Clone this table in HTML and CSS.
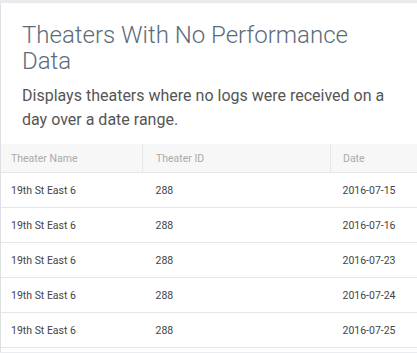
FILE: index.html
```html
<!DOCTYPE html>
<html lang="en">
<head>
  <meta charset="UTF-8" />
  <title>Theaters With No Performance Data</title>
  <link rel="stylesheet" href="styles.css">
</head>
<body>
  <div class="card">
    <div class="card-head">
      <h2>Theaters With No Performance Data</h2>
      <p>Displays theaters where no logs were received on a day over a date range.</p>
    </div>

    <table class="report">
      <thead>
        <tr>
          <th class="col-name">Theater Name</th>
          <th class="col-id">Theater ID</th>
          <th class="col-date">Date</th>
        </tr>
      </thead>
      <tbody>
        <tr><td>19th St East 6</td><td>288</td><td>2016-07-15</td></tr>
        <tr><td>19th St East 6</td><td>288</td><td>2016-07-16</td></tr>
        <tr><td>19th St East 6</td><td>288</td><td>2016-07-23</td></tr>
        <tr><td>19th St East 6</td><td>288</td><td>2016-07-24</td></tr>
        <tr><td>19th St East 6</td><td>288</td><td>2016-07-25</td></tr>
      </tbody>
    </table>
  </div>
</body>
</html>
```

FILE: styles.css
```css
body {
  margin: 0;
  padding: 3px 0 0 1px;
  background-color: #e9ebee;
  font-family: Roboto, 'Liberation Sans', sans-serif;
  overflow: hidden;
}

.card {
  width: 430px;
  padding-bottom: 4px;
  background-color: #fff;
  box-shadow: 0 1px 2px rgba(0,0,0,0.15);
}

.card-head {
  width: 368px;
  padding: 19px 21px 12px;
}

.card-head h2 {
  margin: 0 0 10px;
  font-size: 24px;
  font-weight: 300;
  line-height: 26px;
  color: #5b6b7c;
}

.card-head p {
  margin: 0;
  font-size: 16px;
  line-height: 24px;
  color: #555;
}

.report {
  width: 100%;
  border-collapse: collapse;
  font-size: 10.5px;
}

.report th {
  background-color: #f7f7f7;
  color: #aaa;
  font-weight: 400;
  text-align: left;
  height: 28px;
  padding: 0 10px;
  border-bottom: 1px solid #e6e6e6;
}

.report th + th {
  border-left: 1px solid #e6e6e6;
}

.report td {
  color: #444;
  height: 34px;
  padding: 0 10px;
  border-bottom: 1px solid #e6e6e6;
}

.report td:nth-child(2) {
  padding-left: 13px;
}

.report td:nth-child(3) {
  padding-left: 12px;
}

.col-name { width: 121px; }
.col-id { width: 164px; padding-left: 13px !important; }
.col-date { padding-left: 12px !important; }
```
